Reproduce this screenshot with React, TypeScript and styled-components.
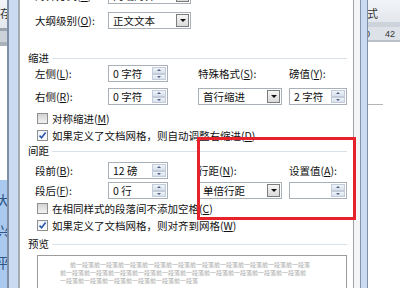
import React from 'react';
import styled, { createGlobalStyle } from 'styled-components';

const GlobalStyle = createGlobalStyle`
  html, body { margin: 0; padding: 0; background: #fff; }
  body { font-family: "Noto Sans CJK SC", "Noto Sans", sans-serif; color: #111; }
`;

const Stage = styled.div`
  position: relative;
  width: 400px;
  height: 300px;
  overflow: hidden;
  background: #fff;
`;

const Screen = styled.div`
  display: flex;
  height: 288px;
`;

/* ---- Word window behind the dialog ---- */

const WordLeft = styled.div`
  width: 7px;
  display: flex;
  flex-direction: column;
  overflow: hidden;
`;

const WordRight = styled.div`
  width: 32px;
  display: flex;
  flex-direction: column;
  overflow: hidden;
`;

const Ribbon = styled.div<{ h: number }>`
  height: ${({ h }) => h}px;
  background: linear-gradient(#f3f5f8, #e2e7ed);
  font-size: 11px;
  line-height: 26px;
  white-space: nowrap;
  color: #333;
`;

const Band = styled.div<{ h: number; c: string }>`
  height: ${({ h }) => h}px;
  background: ${({ c }) => c};
  flex-shrink: 0;
`;

const Ruler = styled.div`
  height: 13px;
  background: #dde2e8;
  display: flex;
  align-items: center;
  gap: 15px;
  font-family: "Liberation Sans", sans-serif;
  font-size: 9px;
  color: #333;
  white-space: nowrap;
  margin-left: -3px;
`;

const PageArea = styled.div`
  flex: 1;
  background: #fff;
  padding-top: 62px;
`;

const MarginTick = styled.div`
  width: 15px;
  height: 1px;
  background: #b4b4b4;
`;

const Selection = styled.div`
  flex: 1;
  background: #a9c9ee;
  color: #2f5687;
  font-size: 14px;
  line-height: 31px;
  padding-top: 5px;
  margin-left: -4px;
  white-space: nowrap;
`;

/* ---- dialog ---- */

const FrameLeft = styled.div`
  width: 9px;
  background: #c9dbf0;
  border-left: 2px solid #7f90a6;
  border-right: 2px solid #a6abb1;
`;

const FrameRight = styled.div`
  display: flex;
  width: 15px;
  border-left: 1px solid #a3a3a3;
  box-sizing: border-box;
  background: #f3f5f7;
  padding-left: 6px;
`;

const FrameRail = styled.div`
  flex: 1;
  background: #c9dbf0;
  border-left: 1px solid #8193ab;
  border-right: 1px solid #7f90a6;
`;

const Client = styled.div`
  width: 333px;
  box-sizing: border-box;
  padding: 0 6px 0 8px;
  background: #fff;
  overflow: hidden;
  display: flex;
  flex-direction: column;
  font-size: 10.5px;
`;

const TopRow = styled.div<{ mt: number }>`
  display: flex;
  align-items: center;
  height: 17px;
  margin-top: ${({ mt }) => mt}px;
  flex-shrink: 0;
`;

const Label = styled.span<{ indent?: boolean }>`
  width: ${({ indent }) => (indent ? '80px' : 'auto')};
  padding-left: ${({ indent }) => (indent ? '7px' : '0')};
  box-sizing: border-box;
  white-space: nowrap;
  line-height: 17px;
`;

const Section = styled.div<{ mt: number }>`
  display: flex;
  align-items: center;
  height: 13px;
  margin-top: ${({ mt }) => mt}px;
  flex-shrink: 0;
  white-space: nowrap;
  &::after {
    content: '';
    flex: 1;
    height: 1px;
    margin: 2px 0 0 3px;
    background: #d8e0e9;
  }
`;

const FieldGrid = styled.div<{ mt: number; gap: number }>`
  display: grid;
  grid-template-columns: 80px 90px 91px 58px;
  grid-template-rows: 17px 17px;
  row-gap: ${({ gap }) => gap}px;
  align-items: center;
  margin-top: ${({ mt }) => mt}px;
  flex-shrink: 0;
`;

const Combo = styled.div<{ w: number }>`
  box-sizing: border-box;
  width: ${({ w }) => w}px;
  height: 17px;
  border: 1px solid #a9b0b8;
  background: #fff;
  display: flex;
`;

const FieldValue = styled.span`
  flex: 1;
  padding-left: 4px;
  line-height: 15px;
  white-space: nowrap;
  overflow: hidden;
`;

const ComboButton = styled.span`
  width: 13px;
  margin: 1px;
  box-sizing: border-box;
  border: 1px solid #7c7c7c;
  background: linear-gradient(#f6f6f6, #dadada);
  display: flex;
  align-items: center;
  justify-content: center;
  &::before {
    content: '';
    border-left: 3px solid transparent;
    border-right: 3px solid transparent;
    border-top: 3px solid #111;
  }
`;

const SpinButtons = styled.span`
  width: 14px;
  margin: 1px;
  display: flex;
  flex-direction: column;
`;

const SpinHalf = styled.span<{ up?: boolean }>`
  flex: 1;
  background: linear-gradient(#f0f4f9, #d6e0ec);
  border: 1px solid #c3ccd8;
  display: flex;
  align-items: center;
  justify-content: center;
  &::before {
    content: '';
    border-left: 2px solid transparent;
    border-right: 2px solid transparent;
    ${({ up }) => (up ? 'border-bottom: 2px solid #4f6283;' : 'border-top: 2px solid #4f6283;')}
  }
`;

const CheckRow = styled.div<{ mt?: number }>`
  display: flex;
  align-items: center;
  gap: 4px;
  height: 17px;
  padding-left: 9px;
  margin-top: ${({ mt }) => mt ?? 0}px;
  flex-shrink: 0;
  white-space: nowrap;
`;

const Box = styled.span<{ checked: boolean }>`
  width: 11px;
  height: 11px;
  box-sizing: border-box;
  border: 1px solid #8e8f8f;
  background: ${({ checked }) => (checked ? 'linear-gradient(#eef3fa, #fbfcfe)' : 'linear-gradient(#d4d4d4, #f2f2f2)')};
  display: flex;
  align-items: center;
  justify-content: center;
`;

const Preview = styled.div`
  margin: 5px 0 0 9px;
  height: 50px;
  flex-shrink: 0;
  border: 1px solid #9c9c9c;
  background: #fff;
  padding: 5px 0 0 22px;
`;

const PreviewText = styled.p`
  margin: 0;
  width: 251px;
  font-size: 6px;
  line-height: 8px;
  text-indent: 10px;
  color: #a9a9a9;
  word-break: break-all;
`;

const Annotation = styled.div`
  position: absolute;
  left: 197px;
  top: 137px;
  width: 159px;
  height: 83px;
  box-sizing: border-box;
  border: 3px solid #e8222b;
  pointer-events: none;
`;

const Key = ({ k }: { k: string }) => (
  <>
    (<u>{k}</u>)
  </>
);

const ComboBox = ({ w, value }: { w: number; value: string }) => (
  <Combo w={w}>
    <FieldValue>{value}</FieldValue>
    <ComboButton />
  </Combo>
);

const Spinner = ({ w, value }: { w: number; value: string }) => (
  <Combo w={w}>
    <FieldValue>{value}</FieldValue>
    <SpinButtons>
      <SpinHalf up />
      <SpinHalf />
    </SpinButtons>
  </Combo>
);

const Check = ({ checked, children, mt }: { checked: boolean; children: React.ReactNode; mt?: number }) => (
  <CheckRow mt={mt}>
    <Box checked={checked}>
      {checked && (
        <svg width="9" height="9" viewBox="0 0 9 9">
          <path d="M1.5 4.6 L3.6 6.8 L7.6 1.6" fill="none" stroke="#2a56ab" strokeWidth="1.6" />
        </svg>
      )}
    </Box>
    <span>{children}</span>
  </CheckRow>
);

export default function App() {
  const previewText = '前一段落'.repeat(26);
  return (
    <Stage>
      <GlobalStyle />
      <Screen>
        <WordLeft>
          <Ribbon h={28}>存</Ribbon>
          <Band h={3} c="#9aa3ad" />
          <Band h={11} c="#cbd1d8" />
          <Band h={4} c="#a9b1ba" />
          <Band h={134} c="#fff" />
          <Selection>
            大<br />兴<br />平
          </Selection>
        </WordLeft>

        <FrameLeft />
        <Client>
          <TopRow mt={-13}>
            <Label indent>
              对齐方式<Key k="G" />:
            </Label>
            <ComboBox w={83} value="两端对齐" />
          </TopRow>
          <TopRow mt={8}>
            <Label indent>
              大纲级别<Key k="O" />:
            </Label>
            <ComboBox w={83} value="正文文本" />
          </TopRow>

          <Section mt={22}>缩进</Section>
          <FieldGrid mt={1} gap={6}>
            <Label indent>
              左侧<Key k="L" />:
            </Label>
            <Spinner w={60} value="0 字符" />
            <Label>
              特殊格式<Key k="S" />:
            </Label>
            <Label>
              磅值<Key k="Y" />:
            </Label>
            <Label indent>
              右侧<Key k="R" />:
            </Label>
            <Spinner w={60} value="0 字符" />
            <ComboBox w={84} value="首行缩进" />
            <Spinner w={58} value="2 字符" />
          </FieldGrid>
          <Check checked={false} mt={5}>
            对称缩进<Key k="M" />
          </Check>
          <Check checked>
            如果定义了文档网格，则自动调整右缩进<Key k="D" />
          </Check>

          <Section mt={0}>间距</Section>
          <FieldGrid mt={5} gap={3}>
            <Label indent>
              段前<Key k="B" />:
            </Label>
            <Spinner w={60} value="12 磅" />
            <Label>
              行距<Key k="N" />:
            </Label>
            <Label>
              设置值<Key k="A" />:
            </Label>
            <Label indent>
              段后<Key k="F" />:
            </Label>
            <Spinner w={60} value="0 行" />
            <ComboBox w={84} value="单倍行距" />
            <Spinner w={58} value="" />
          </FieldGrid>
          <Check checked={false} mt={1}>
            在相同样式的段落间不添加空格<Key k="C" />
          </Check>
          <Check checked>
            如果定义了文档网格，则对齐到网格<Key k="W" />
          </Check>

          <Section mt={3}>预览</Section>
          <Preview>
            <PreviewText>{previewText}</PreviewText>
          </Preview>
        </Client>
        <FrameRight>
          <FrameRail />
        </FrameRight>

        <WordRight>
          <Ribbon h={22}>
            <span style={{ marginLeft: -1 }}>式</span>
          </Ribbon>
          <Band h={5} c="#cdd3da" />
          <Ruler>
            <span>0</span>
            <span>42</span>
          </Ruler>
          <Band h={2} c="#b8bfc7" />
          <PageArea>
            <MarginTick />
          </PageArea>
        </WordRight>
      </Screen>
      <Annotation />
    </Stage>
  );
}
